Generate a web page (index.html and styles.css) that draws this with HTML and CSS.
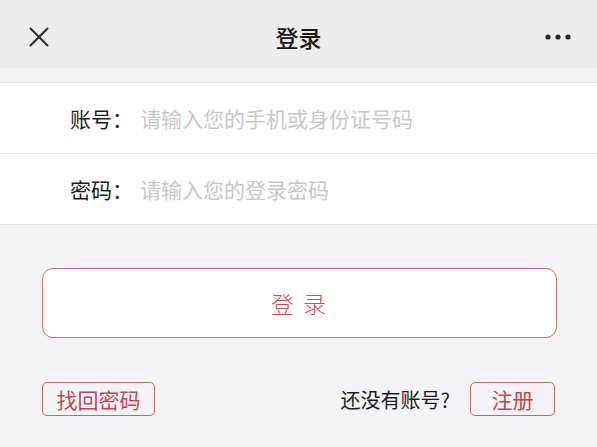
FILE: index.html
```html
<!DOCTYPE html>
<html lang="zh-CN">
<head>
<meta charset="utf-8">
<title>登录</title>
<link rel="stylesheet" href="styles.css">
</head>
<body>
<header class="topbar">
  <div class="topbar-left">
    <svg class="icon-close" width="20" height="20" viewBox="0 0 20 20"><path d="M1.5 1.5 L18.5 18.5 M18.5 1.5 L1.5 18.5" stroke="#2b2b2b" stroke-width="2" stroke-linecap="round" fill="none"/></svg>
  </div>
  <h1 class="topbar-title">登录</h1>
  <div class="topbar-right">
    <svg class="icon-more" width="26" height="6" viewBox="0 0 26 6"><circle cx="3" cy="3" r="2.6" fill="#2b2b2b"/><circle cx="13" cy="3" r="2.6" fill="#2b2b2b"/><circle cx="23" cy="3" r="2.6" fill="#2b2b2b"/></svg>
  </div>
</header>
<div class="band"></div>
<form class="form">
  <div class="field">
    <span class="field-label">账号：</span>
    <span class="field-input">请输入您的手机或身份证号码</span>
  </div>
  <div class="field">
    <span class="field-label">密码：</span>
    <span class="field-input">请输入您的登录密码</span>
  </div>
</form>
<div class="actions">
  <div class="btn-login">登 录</div>
  <div class="links">
    <span class="btn-small btn-forgot">找回密码</span>
    <div class="register">
      <span class="register-text">还没有账号?</span>
      <span class="btn-small btn-register">注册</span>
    </div>
  </div>
</div>
</body>
</html>
```
FILE: styles.css
```css
html, body {
  margin: 0;
  padding: 0;
}
body {
  background: #f4f4f8;
  font-family: "Noto Sans CJK SC", "Noto Sans", sans-serif;
  color: #1c1c1c;
  width: 597px;
  height: 447px;
  overflow: hidden;
}
.topbar {
  height: 68px;
  background: #ededed;
  display: grid;
  grid-template-columns: 1fr auto 1fr;
  align-items: center;
}
.topbar-left {
  padding-left: 29px;
  display: flex;
  align-items: center;
  padding-top: 6px;
}
.topbar-right {
  display: flex;
  justify-content: flex-end;
  padding-right: 26px;
  padding-top: 6px;
}
.topbar-title {
  margin: 0;
  font-size: 23px;
  font-weight: 500;
  color: #181818;
  line-height: 1;
  padding-top: 6px;
}
.band {
  height: 14px;
  background: #f3f3f6;
  border-bottom: 1px solid #e2e2e4;
}
.form {
  margin: 0;
  background: #fff;
}
.field {
  height: 70px;
  border-bottom: 1px solid #e6e6e8;
  display: flex;
  align-items: center;
  padding-left: 70px;
  font-size: 21px;
}
.field-label {
  width: 70px;
  color: #1c1c1c;
}
.field-input {
  color: #c8c8cc;
}
.actions {
  padding: 43px 40px 0 42px;
}
.btn-login {
  height: 68px;
  border: 1.5px solid #cc6a6e;
  border-radius: 11px;
  background: #fff;
  display: flex;
  align-items: center;
  justify-content: center;
  color: #cf4c51;
  font-size: 23px;
  letter-spacing: 2px;
  font-weight: 300;
}
.links {
  margin-top: 44px;
  display: flex;
  justify-content: space-between;
  align-items: center;
  padding-right: 2px;
}
.btn-small {
  height: 32px;
  border: 1.5px solid #c8676b;
  border-radius: 5px;
  display: flex;
  align-items: center;
  justify-content: center;
  color: #c7444a;
  font-size: 21px;
  box-sizing: content-box;
}
.btn-forgot {
  width: 111px;
}
.btn-register {
  width: 83px;
}
.register {
  display: flex;
  align-items: center;
}
.register-text {
  font-size: 20px;
  color: #1c1c1c;
  margin-right: 20px;
}
```
